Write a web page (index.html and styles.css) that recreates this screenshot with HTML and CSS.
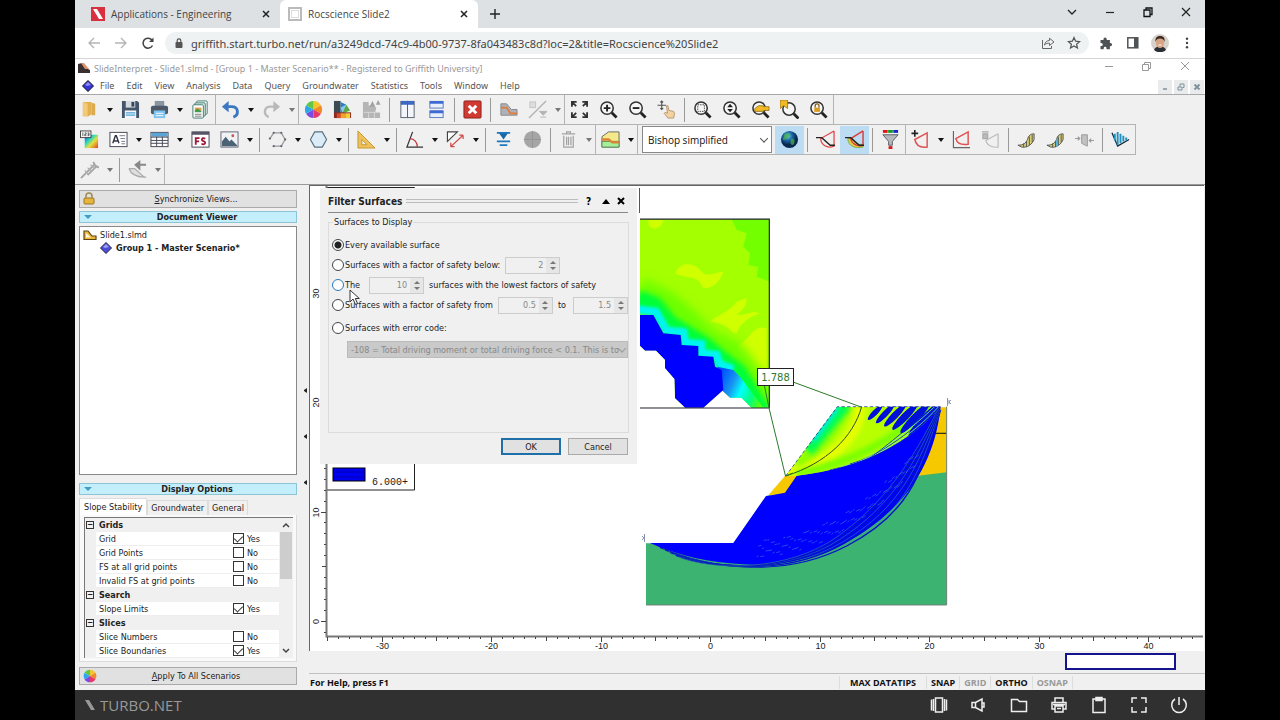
FILE: index.html
```html
<!DOCTYPE html>
<html lang="en">
<head>
    <meta charset="UTF-8">
    <meta name="viewport" content="width=device-width, initial-scale=1.0">
    <title>Rocscience Slide2</title>
    <link rel="stylesheet" href="styles.css">
</head>
<body>
    <div class="screen">
        <div class="tab-strip">
            <div class="tab">
                <svg width="14" height="14" viewBox="0 0 14 14"><rect width="14" height="14" fill="#d9303e"/><path d="M2 2h4l6 10H8z" fill="#fff"/></svg>
                <span class="tab-title">Applications - Engineering</span>
                <button class="tab-close" aria-label="Close tab"><svg width="8" height="8" viewBox="0 0 8 8"><path d="M1 1l6 6M7 1L1 7" stroke="#222" stroke-width="1.5"/></svg></button>
            </div>
            <div class="tab active">
                <svg width="14" height="14" viewBox="0 0 14 14"><rect x="1" y="1" width="12" height="12" fill="#fff" stroke="#bbb" stroke-width="2"/><rect x="3.500" y="3.500" width="7" height="7" fill="none" stroke="#ddd"/></svg>
                <span class="tab-title">Rocscience Slide2</span>
                <button class="tab-close" aria-label="Close tab"><svg width="8" height="8" viewBox="0 0 8 8"><path d="M1 1l6 6M7 1L1 7" stroke="#222" stroke-width="1.5"/></svg></button>
            </div>
            <button class="new-tab" aria-label="New tab"><svg width="12" height="12" viewBox="0 0 12 12"><path d="M6 1v10M1 6h10" stroke="#222" stroke-width="1.400"/></svg></button>
            <div class="window-buttons">
                <button aria-label="Search tabs"><svg width="12" height="12" viewBox="0 0 12 12"><path d="M2 4l4 4 4-4" fill="none" stroke="#222" stroke-width="1.300"/></svg></button>
                <button aria-label="Minimize"><svg width="12" height="12" viewBox="0 0 12 12"><path d="M2 6.500h8" stroke="#222" stroke-width="1.200"/></svg></button>
                <button aria-label="Restore"><svg width="12" height="12" viewBox="0 0 12 12"><path d="M2 4h6v6.500H2zM4 4V2h6v6.500H8" fill="none" stroke="#111" stroke-width="1.300"/></svg></button>
                <button aria-label="Close"><svg width="12" height="12" viewBox="0 0 12 12"><path d="M2 2l8 8M10 2l-8 8" stroke="#222" stroke-width="1.200"/></svg></button>
            </div>
        </div>

        <div class="address-row">
            <button class="nav-btn" aria-label="Back"><svg width="14" height="14" viewBox="0 0 14 14"><path d="M13 7H2M7 2L2 7l5 5" fill="none" stroke="#b4b4b4" stroke-width="1.300"/></svg></button>
            <button class="nav-btn" aria-label="Forward"><svg width="14" height="14" viewBox="0 0 14 14"><path d="M1 7h11M7 2l5 5-5 5" fill="none" stroke="#b4b4b4" stroke-width="1.300"/></svg></button>
            <button class="nav-btn" aria-label="Reload"><svg width="14" height="14" viewBox="0 0 14 14"><path d="M11.500 9.500a5 5 0 1 1 .3-4" fill="none" stroke="#444" stroke-width="1.500"/><path d="M12.500 1.500v4.500H8z" fill="#444"/></svg></button>
            <div class="url-box">
                <svg width="8" height="10" viewBox="0 0 8 10"><rect x=".5" y="4" width="7" height="6" rx="1" fill="#555"/><path d="M2.200 4V2.600a1.800 1.800 0 0 1 3.600 0V4" fill="none" stroke="#555" stroke-width="1.200"/></svg>
                <input class="url" type="text" aria-label="Address" value="griffith.start.turbo.net/run/a3249dcd-74c9-4b00-9737-8fa043483c8d?loc=2&amp;title=Rocscience%20Slide2">
                <button aria-label="Share"><svg width="14" height="14" viewBox="0 0 14 14"><path d="M1.500 4v8.500h9V10" fill="none" stroke="#666"/><path d="M3.500 9c.5-3 2.500-4.500 5-4.500V2.200L13 6 8.500 9.500V7.200C6.500 7 5 7.500 3.500 9z" fill="none" stroke="#666"/></svg></button>
                <button aria-label="Bookmark"><svg width="14" height="14" viewBox="0 0 14 14"><path d="M7 1.500l1.600 3.700 4 .4-3 2.600.9 3.900L7 10l-3.500 2.100.9-3.900-3-2.600 4-.4z" fill="none" stroke="#555" stroke-width="1.200"/></svg></button>
            </div>
            <button class="ext-btn" aria-label="Extensions"><svg width="14" height="14" viewBox="0 0 14 14"><path d="M1.500 4h3V3a1.600 1.600 0 0 1 3.200 0v1h3.200v3h.6a1.600 1.600 0 0 1 0 3.200h-.6v3H7.500v-1a1.400 1.400 0 0 0-2.800 0v1H1.500V10h.8a1.500 1.500 0 0 0 0-3h-.8z" fill="#505356"/></svg></button>
            <button class="ext-btn" aria-label="Side panel"><svg width="14" height="14" viewBox="0 0 14 14"><rect x="1.800" y="1.800" width="10" height="10" fill="none" stroke="#505356" stroke-width="1.500"/><rect x="8" y="2" width="4" height="10" fill="#505356"/></svg></button>
            <button class="ext-btn" aria-label="Profile"><svg width="18" height="18" viewBox="0 0 18 18"><circle cx="9" cy="9" r="9" fill="#d6d2cb"/><path d="M3 16c1-3 3-3.500 6-3.500s5 .5 6 3.500a9 9 0 0 1-12 0z" fill="#2b2f36"/><ellipse cx="9" cy="8.500" rx="4" ry="5.500" fill="#d9a483"/><path d="M4.500 8c-.6-4 1.500-6 4.500-6s5.300 1.500 4.500 6c-.6-2-1.500-3.500-4.500-3.500S5.200 6 4.500 8z" fill="#3a2a22"/><path d="M7.500 11h3" stroke="#fff"/></svg></button>
            <button class="ext-btn" aria-label="Menu"><svg width="14" height="14" viewBox="0 0 14 14"><g fill="#444"><circle cx="7" cy="2.800" r="1.200"/><circle cx="7" cy="7" r="1.200"/><circle cx="7" cy="11.200" r="1.200"/></g></svg></button>
        </div>

        <div class="app-title">
            <svg width="14" height="12" viewBox="0 0 14 12"><rect width="14" height="12" rx="1" fill="#fff"/><path d="M1 2l4-1 2 4 6 3v3H1z" fill="#3a3030"/><path d="M4 1l3 0 5 6-4 0z" fill="#e0916a"/></svg>
            <span>SlideInterpret - Slide1.slmd - [Group 1 - Master Scenario** - Registered to Griffith University]</span>
            <div class="window-buttons faded">
                <button aria-label="Minimize"><svg width="12" height="12" viewBox="0 0 12 12"><path d="M2 6.500h8" stroke="#999"/></svg></button>
                <button aria-label="Restore"><svg width="12" height="12" viewBox="0 0 12 12"><path d="M1.500 4.500h6v6h-6zM3.500 4V2.500h6v6H8" fill="none" stroke="#999"/></svg></button>
                <button aria-label="Close"><svg width="12" height="12" viewBox="0 0 12 12"><path d="M2 2l8 8M10 2l-8 8" stroke="#999"/></svg></button>
            </div>
        </div>

        <nav class="menu-bar">
            <svg width="12" height="12" viewBox="0 0 12 12"><path d="M6 .5L11.500 6 6 11.500.5 6z" fill="#3535d8" stroke="#111"/><path d="M6 2l3 3-4 1-2-1z" fill="#8d8df5"/></svg>
            <button>File</button><button>Edit</button><button>View</button><button>Analysis</button><button>Data</button><button>Query</button><button>Groundwater</button><button>Statistics</button><button>Tools</button><button>Window</button><button>Help</button>
            <div class="child-buttons">
                <button aria-label="Minimize view"><svg width="8" height="8" viewBox="0 0 8 8"><path d="M2 6h4" stroke="#7d9299" stroke-width="1.500"/></svg></button>
                <button aria-label="Restore view"><svg width="8" height="8" viewBox="0 0 8 8"><path d="M1 4h4v3H1zM3 3.500V1h4v3.500H5.500" fill="none" stroke="#7d9299"/></svg></button>
                <button aria-label="Close view"><svg width="8" height="8" viewBox="0 0 8 8"><path d="M1.500 1.500l5 5M6.500 1.500l-5 5" stroke="#7d9299" stroke-width="1.800"/></svg></button>
            </div>
        </nav>

        <div class="toolbars">
            <div class="toolbar">
                <div class="group">
                    <button class="tool" aria-label="Open"><svg viewBox="0 0 20 20"><path d="M3 2h9v13l-3 2H3z" fill="#e3b04f"/><path d="M3 2l5 2v14l-5-2z" fill="#f3ca77"/><path d="M12 3v13h4V4z" fill="#dcab50"/></svg></button>
                    <button class="drop" aria-label="Open options"></button>
                    <button class="tool" aria-label="Save"><svg viewBox="0 0 20 20"><path d="M1 1h16l2 2v16H1z" fill="#44546a"/><rect x="5" y="1" width="10" height="7" fill="#d5dae0"/><rect x="11" y="2" width="3" height="5" fill="#35455a"/><rect x="4" y="11" width="12" height="8" fill="#f4f8fb"/><path d="M5 13.500h10M5 16h10" stroke="#4ca3d8" stroke-width="1.400"/></svg></button>
                    <button class="tool" aria-label="Print"><svg viewBox="0 0 20 20"><rect x="5" y="1" width="10" height="6" fill="#8b96a3"/><rect x="1" y="6" width="18" height="9" rx="2" fill="#4e5a67"/><rect x="4" y="11" width="12" height="8" fill="#7cc3ef"/><path d="M6 14h8M6 16.500h8" stroke="#fff"/></svg></button>
                    <button class="drop" aria-label="Print options"></button>
                    <button class="tool" aria-label="Copy"><svg viewBox="0 0 20 20"><rect x="6" y="1" width="11" height="14" rx="1" fill="#fff" stroke="#3d7a70"/><rect x="4" y="3" width="11" height="14" rx="1" fill="#dff0e4" stroke="#3d7a70"/><rect x="2" y="5" width="11" height="14" rx="1" fill="#fff" stroke="#3d7a70"/><rect x="4" y="8" width="7" height="4" fill="#e2a146"/><path d="M4 11l3-2 4 3v1H4z" fill="#3e9c52"/><path d="M4 15h7M4 17h7" stroke="#777"/></svg></button>
                </div>
                <div class="group">
                    <button class="tool" aria-label="Undo"><svg viewBox="0 0 20 20"><path d="M5 7h6c8 0 8 9 2 11" fill="none" stroke="#3b78c2" stroke-width="3"/><path d="M8 1v12L1 7z" fill="#3b78c2"/></svg></button>
                    <button class="drop" aria-label="Undo history"></button>
                    <button class="tool" aria-label="Redo"><svg viewBox="0 0 20 20"><path d="M14 7H9c-7 0-8 8-2 11" fill="none" stroke="#b9b9b9" stroke-width="2.500"/><path d="M12 1v12l7-6z" fill="#b9b9b9"/></svg></button>
                    <button class="drop off" aria-label="Redo history"></button>
                </div>
                <div class="group">
                    <button class="tool" aria-label="Contours"><svg viewBox="0 0 20 20"><use href="#wheel"/></svg></button>
                    <button class="tool" aria-label="Color palette"><svg viewBox="0 0 20 20"><path d="M1 1h7v13H1z" fill="#3c4a55"/><path d="M8 2l6 3-6 10z" fill="#2f7fc0"/><path d="M14 5l4 6-10 4z" fill="#58a945"/><path d="M8 8l6-3-4 9z" fill="#8cc8ea"/><rect x="1" y="13" width="18" height="6" fill="#8d2b22"/><rect x="4" y="14" width="4" height="5" fill="#d84a2e"/><rect x="8" y="14" width="5" height="5" fill="#f3a12e"/><rect x="13" y="14" width="5" height="5" fill="#f2d13c"/></svg></button>
                    <button class="tool" aria-label="Water palette"><svg viewBox="0 0 20 20"><path d="M1 2h6v4l3-1 5 3-1 5h5v6H1z" fill="#b5b5b5"/><path d="M11 1l3 6H8zM17 0l2.500 5h-5z" fill="#a2a2a2"/><path d="M7 13v6M13 13v6M2 13h17" stroke="#d8d8d8"/></svg></button>
                    <i class="sep"></i>
                    <button class="tool" aria-label="Tile vertically"><svg viewBox="0 0 20 20"><g fill="#f3f5fa" stroke="#5b6470"><rect x="3" y="1.500" width="7" height="17"/><rect x="10" y="1.500" width="7" height="17"/></g><path d="M3 1h14v4H3z" fill="#3d69c4"/><path d="M10 1v18" stroke="#5b6470"/></svg></button>
                    <button class="tool" aria-label="Tile horizontally"><svg viewBox="0 0 20 20"><g fill="#e8eefb" stroke="#5b79b8"><rect x="3" y="1.500" width="14" height="7"/><rect x="3" y="11.500" width="14" height="7"/></g><path d="M3 1h14v3H3zM3 11h14v3H3z" fill="#3d69d4"/></svg></button>
                    <i class="sep"></i>
                    <button class="tool" aria-label="Close view"><svg viewBox="0 0 20 20"><rect x="1" y="1" width="18" height="18" rx="1" fill="#d03a30" stroke="#8c2018"/><path d="M6 6l8 8M14 6l-8 8" stroke="#fff" stroke-width="3"/></svg></button>
                    <i class="sep"></i>
                    <button class="tool" aria-label="Material"><svg viewBox="0 0 20 20"><path d="M2 4h6l5 6h6v6H2z" fill="#aeb1b8" stroke="#888"/><path d="M2 8h6l4 6h7" fill="none" stroke="#e07b3a" stroke-width="1.800"/></svg></button>
                    <button class="tool" aria-label="Query"><svg viewBox="0 0 20 20"><rect x="2" y="2" width="6" height="6" fill="#ddd" stroke="#c5c5c5"/><path d="M1 19L19 1" stroke="#b3b3b3" stroke-width="1.500"/><path d="M12 12h8l-4 4zM13 18h6" fill="#b3b3b3" stroke="#b3b3b3"/></svg></button>
                    <button class="drop off" aria-label="Query options"></button>
                </div>
                <div class="group">
                    <button class="tool" aria-label="Zoom all"><svg viewBox="0 0 20 20"><path d="M2 7V2h5M2.500 2.500l4 4M13 2h5v5M17.500 2.500l-4 4M2 13v5h5M2.500 17.500l4-4M18 13v5h-5M17.500 17.500l-4-4" fill="none" stroke="#333" stroke-width="1.900"/></svg></button>
                    <button class="tool" aria-label="Zoom in"><svg viewBox="0 0 20 20"><use href="#lens"/><path d="M8.500 5v7M5 8.500h7" stroke="#222" stroke-width="2"/></svg></button>
                    <button class="tool" aria-label="Zoom out"><svg viewBox="0 0 20 20"><use href="#lens"/><path d="M5 8.500h7" stroke="#222" stroke-width="2"/></svg></button>
                    <button class="tool" aria-label="Pan"><svg viewBox="0 0 20 20"><path d="M5 1v9M.500 5.500h9M3.500 2.500L5 1l1.500 1.500M3.500 8.500L5 10l1.500-1.500" fill="none" stroke="#555" stroke-width="1.200"/><path d="M10 6l1.500 0 1 5 5 1 1 2-1 5h-6l-4-5 1-1 2.500 1z" fill="#f3d2a2" stroke="#a8865a" stroke-width=".8"/></svg></button>
                    <i class="sep"></i>
                    <button class="tool" aria-label="Zoom window"><svg viewBox="0 0 20 20"><use href="#lens"/><rect x="5" y="5" width="7" height="7" fill="none" stroke="#444" stroke-dasharray="1.500 1"/></svg></button>
                    <button class="tool" aria-label="Zoom mouse"><svg viewBox="0 0 20 20"><use href="#lens"/><path d="M5.500 7.500h6l-3-3.500zM5.500 9.500h6l-3 3.500z" fill="#222"/></svg></button>
                    <button class="tool" aria-label="Zoom excavation"><svg viewBox="0 0 20 20"><use href="#lens"/><path d="M4 12V9l4-3h5v1h6v4h-6v1z" fill="#f2b926" stroke="#8a6b16" stroke-width=".8"/></svg></button>
                    <button class="tool" aria-label="Zoom bookmark"><svg viewBox="0 0 20 20"><g transform="translate(1 1)"><use href="#lens"/></g><path d="M0 0h8v9L4 6 0 9z" fill="#f2b926" stroke="#8a6b16" stroke-width=".8"/></svg></button>
                    <button class="tool" aria-label="Zoom lock"><svg viewBox="0 0 20 20"><use href="#lens"/><rect x="5.500" y="8" width="6" height="4.500" fill="#d99c1c"/><path d="M6.500 8V6a2 2 0 0 1 4 0v2" fill="none" stroke="#7a5a12" stroke-width="1.300"/></svg></button>
                </div>
            </div>

            <div class="toolbar lined">
                <div class="group">
                    <button class="tool" aria-label="Data tips"><svg viewBox="0 0 20 20"><rect x="5" y="5" width="14" height="14" fill="url(#spectrum)"/><rect x=".5" y="1" width="11" height="7" fill="#fff" stroke="#444"/><path d="M3 2.500v4M5 3h1.500v1.500H5V6h1.700M8 3h1.500v3H8M8 4.500h1.500" fill="none" stroke="#333" stroke-width=".8"/></svg></button>
                    <button class="tool" aria-label="Text"><svg viewBox="0 0 20 20"><rect x="1" y="2.500" width="18" height="15" fill="#fff" stroke="#445"/><path d="M4 14l2.700-8h1L10.500 14M5 11.500h4.500" fill="none" stroke="#334" stroke-width="1.500"/><path d="M11 6h6M12 9h5M13 12h4M13 14.500h4" stroke="#778"/></svg></button>
                    <button class="drop" aria-label="Text options"></button>
                    <button class="tool" aria-label="Table"><svg viewBox="0 0 20 20"><rect x="1" y="2.500" width="18" height="15" fill="#fff" stroke="#445"/><rect x="1.500" y="3" width="17" height="4" fill="#5aa5d6"/><path d="M1 7.500h18M1 11h18M1 14h18M7 7v10M13 7v10" stroke="#445"/></svg></button>
                    <button class="drop" aria-label="Table options"></button>
                    <button class="tool" aria-label="Factor of safety"><svg viewBox="0 0 20 20"><rect x="1" y="2" width="18" height="16" fill="#fff" stroke="#445"/><rect x="1" y="2" width="18" height="3" fill="#556"/><path d="M5 15.500V8.500h4M5 12h3.500M15 9c-4-1.500-4.500 2-2 2.700 3 .8 2.500 4.300-2 3" fill="none" stroke="#a01838" stroke-width="1.900"/></svg></button>
                    <button class="tool" aria-label="Image"><svg viewBox="0 0 20 20"><rect x="1" y="2" width="18" height="16" fill="#eef2f5" stroke="#667"/><path d="M2 12l4-5 4 5 2-2 6 6v1H2z" fill="#4b6174"/><circle cx="13.500" cy="6" r="1.500" fill="#d4504c"/></svg></button>
                    <button class="drop" aria-label="Image options"></button>
                    <i class="sep"></i>
                    <button class="tool" aria-label="Polyline"><svg viewBox="0 0 20 20"><path d="M2 9l4-6h8l4 7-4 7H6" fill="none" stroke="#999" stroke-width="1.300"/><g fill="#667"><circle cx="2" cy="9" r="1.200"/><circle cx="6" cy="3" r="1.200"/><circle cx="14" cy="3" r="1.200"/><circle cx="18" cy="10" r="1.200"/><circle cx="14" cy="17" r="1.200"/><circle cx="6" cy="17" r="1.200"/></g></svg></button>
                    <button class="drop" aria-label="Polyline options"></button>
                    <button class="tool" aria-label="Polygon"><svg viewBox="0 0 20 20"><path d="M1.500 10L6 2h8l4.500 8L14 18H6z" fill="#dcecf6" stroke="#56707f" stroke-width="1.200"/></svg></button>
                    <button class="drop" aria-label="Polygon options"></button>
                    <i class="sep"></i>
                    <button class="tool" aria-label="Dimension"><svg viewBox="0 0 20 20"><path d="M1 1l18 18H1z" fill="#edc258" stroke="#c79630"/><path d="M5 10l5.500 5.500H5z" fill="#efefef" stroke="#c79630"/></svg></button>
                    <button class="drop" aria-label="Dimension options"></button>
                    <i class="sep"></i>
                    <button class="tool" aria-label="Angle"><svg viewBox="0 0 20 20"><path d="M8 2L2 18h17" fill="none" stroke="#333" stroke-width="1.300"/><path d="M5 9c5 0 8 4 8 9" fill="none" stroke="#c03030" stroke-width="1.300"/></svg></button>
                    <button class="drop" aria-label="Angle options"></button>
                    <button class="tool" aria-label="Measure"><svg viewBox="0 0 20 20"><path d="M1.500 2v10L12 2z" fill="#fff" stroke="#444" stroke-width="1.200"/><path d="M5 17.500L18 5.500M5 17.500v-4M5 17.500h4M18 5.500v4M18 5.500h-4" fill="none" stroke="#d04848" stroke-width="1.300"/></svg></button>
                    <button class="drop" aria-label="Measure options"></button>
                    <i class="sep"></i>
                    <button class="tool" aria-label="Water level"><svg viewBox="0 0 20 20"><path d="M5 3h10l-5 7z" fill="#1767a8"/><path d="M3 3h14M3 12h14M6 16h8" stroke="#1f78bd" stroke-width="1.800"/></svg></button>
                    <button class="tool" aria-label="Stereonet"><svg viewBox="0 0 20 20"><circle cx="10" cy="10" r="9" fill="#a5a5a5"/><path d="M10 1v18M1 10h18" stroke="#959595"/></svg></button>
                    <i class="sep"></i>
                    <button class="tool" aria-label="Delete"><svg viewBox="0 0 20 20"><path d="M3 4h14M8 4V2h4v2M5 6v12h10V6M8 7v9M10 7v9M12.500 7v9" fill="none" stroke="#a3a3a3" stroke-width="1.300"/></svg></button>
                    <button class="drop off" aria-label="Delete options"></button>
                </div>
                <div class="group">
                    <button class="tool" aria-label="Layers"><svg viewBox="0 0 20 20"><path d="M1 7l7-5h11v16H1z" fill="#f5e98c" stroke="#666"/><path d="M1 12h18v6H1z" fill="#a5ef9a" stroke="#5d8a55"/><path d="M1 10h7l4 3h7" fill="none" stroke="#d98436" stroke-width="2.500"/></svg></button>
                    <button class="drop" aria-label="Layer options"></button>
                </div>
                <div class="group">
                    <span class="combo method"><select aria-label="Analysis method"><option>Bishop simplified</option></select></span>
                    <button class="tool pressed" aria-label="Global minimum"><svg viewBox="0 0 20 20"><circle cx="10" cy="10" r="9" fill="url(#globe)"/><path d="M5 4c5-2 6 1 4 3s-3 4-6 3zM12 9c3 0 4 2 3 5s-4 2-4-1z" fill="#48b04a" opacity=".75"/></svg></button>
                    <i class="sep"></i>
                    <button class="tool" aria-label="Minimum surfaces"><svg viewBox="0 0 20 20"><path d="M19 1v16c-8 3-14-2-14-8L19 1" fill="none" stroke="#e04545" stroke-width="1.300"/><path d="M0 8h6l9 8h5" fill="none" stroke="#222" stroke-width="1.500"/></svg></button>
                    <button class="tool pressed" aria-label="All surfaces"><svg viewBox="0 0 20 20"><path d="M3 9c0 8 8 11 16 9v-3c-7 1-10-2-11-6z" fill="#e9c94a" stroke="#78b04a"/><path d="M19 1v15c-7 2-12-2-13-7L19 1" fill="none" stroke="#d93b3b" stroke-width="1.500"/><path d="M0 8h6l9 8h5" fill="none" stroke="#222" stroke-width="1.500"/></svg></button>
                    <i class="sep"></i>
                    <button class="tool" aria-label="Filter surfaces"><svg viewBox="0 0 20 20"><rect x="2" y="0" width="5" height="3" fill="#e01818"/><rect x="7.500" y="0" width="5" height="3" fill="#159a2c"/><rect x="13" y="0" width="5" height="3" fill="#1c22d8"/><path d="M2 5h16l-6 7v4H8v-4z" fill="#b5b9bd" stroke="#5c6064"/><rect x="8" y="17" width="4" height="3" fill="#d81818"/></svg></button>
                </div>
                <div class="group">
                    <button class="tool" aria-label="Add query"><svg viewBox="0 0 20 20"><path d="M4 0v7M.500 3.500h7" stroke="#222" stroke-width="1.700"/><path d="M17 3v15c-8 1-12-3-13-8z" fill="none" stroke="#e05050" stroke-width="1.500"/></svg></button>
                    <button class="drop" aria-label="Query options"></button>
                    <button class="tool" aria-label="Graph query"><svg viewBox="0 0 20 20"><path d="M1.500 1v17.500H19" fill="none" stroke="#666" stroke-width="1.200"/><path d="M17 2v13c-8 1-12-2-13-6z" fill="none" stroke="#e05050" stroke-width="1.500"/></svg></button>
                    <button class="tool" aria-label="Delete query"><svg viewBox="0 0 20 20"><path d="M1 2h7M2 4h5v5H2z" fill="#bbb" stroke="#aaa" stroke-width="1.300"/><path d="M18 4v14c-8 1-12-3-13-7l13-7" fill="none" stroke="#bcbcbc" stroke-width="1.300"/></svg></button>
                    <i class="sep"></i>
                    <button class="tool" aria-label="Show slices"><svg viewBox="0 0 20 20"><path d="M1 16c6 0 8-2 10-6 1-4 3-6 7-6v6c-2 5-7 9-13 8z" fill="#d9cf74" stroke="#555"/><path d="M7 14v4M10 12v6M13 7v9M16 5v8" stroke="#555"/></svg></button>
                    <button class="tool" aria-label="Query slices"><svg viewBox="0 0 20 20"><path d="M1 16c6 0 8-2 10-6 1-4 3-6 7-6v6c-2 5-7 9-13 8z" fill="#d9cf74" stroke="#555"/><path d="M10 12l3-5v9l-3 2z" fill="#59b7dc"/><path d="M7 14v4M10 12v6M13 7v9M16 5v8" stroke="#555"/></svg></button>
                    <button class="tool" aria-label="Slice data"><svg viewBox="0 0 20 20"><path d="M7 5h6v12l-6-3z" fill="#c2c2c2" stroke="#999"/><path d="M0 9h5M3 7l2 2-2 2M20 11h-5M17 9l-2 2 2 2" fill="none" stroke="#999" stroke-width="1.200"/></svg></button>
                    <i class="sep"></i>
                    <button class="tool" aria-label="Plot along surface"><svg viewBox="0 0 20 20"><path d="M1 3l6 14 12-7" fill="none" stroke="#123" stroke-width="1.300"/><path d="M4 4v7M7 2v14M10 4v10M13 6v6M16 8v3" stroke="#2090c0" stroke-width="2"/></svg></button>
                </div>
            </div>

            <div class="toolbar">
                <div class="group">
                    <button class="tool" aria-label="Support forces"><svg viewBox="0 0 20 20"><path d="M1 19L6 14M6 14l9-9M8 16L17 7M14 2l2 4 4 2" fill="none" stroke="#a5a5a5" stroke-width="2"/><path d="M5 11l4 4M8 8l4 4M11 5l4 4" fill="none" stroke="#b0b0b0" stroke-width="1.200"/></svg></button>
                    <button class="drop off" aria-label="Support options"></button>
                    <i class="sep"></i>
                    <button class="tool" aria-label="Loads"><svg viewBox="0 0 20 20"><path d="M1 9h6l10 9h2M1 9c2 6 8 9 16 9" fill="#ddd" stroke="#ababab" stroke-width="1.300"/><path d="M19 5h-8M12 2L8 5l4 4z" fill="#888" stroke="#888" stroke-width="2"/></svg></button>
                    <button class="drop off" aria-label="Load options"></button>
                </div>
            </div>
        </div>

        <div class="workspace">
            <aside class="side">
                <button class="wide-btn">
                    <svg width="12" height="14" viewBox="0 0 12 14"><rect x="1" y="6" width="10" height="6" rx="1" fill="#e5b53c" stroke="#9c7420"/><path d="M3 6V4a3 3 0 0 1 6 0v2" fill="none" stroke="#9c8a55" stroke-width="1.500"/></svg>
                    <span><u>S</u>ynchronize Views...</span>
                </button>
                <h2 class="pane-title"><svg width="8" height="5" viewBox="0 0 8 5"><path d="M0 0h8L4 4z" fill="#3f9fc0"/></svg><span>Document Viewer</span></h2>
                <div class="tree">
                    <div class="tree-row"><svg width="14" height="10" viewBox="0 0 14 10"><path d="M1 1h4l4 5h4v3.500H1z" fill="#efb83a" stroke="#5b4312" stroke-width="1.200"/><path d="M3 3l5 4.500H3z" fill="#fff6d8"/></svg>Slide1.slmd</div>
                    <div class="tree-row child"><svg width="12" height="12" viewBox="0 0 12 12"><path d="M6 .5L11.500 6 6 11.500.5 6z" fill="#4b4bdc" stroke="#223"/><path d="M6 2l3 3-4 1-2-1z" fill="#9d9df5"/></svg><b>Group 1 - Master Scenario*</b></div>
                </div>
                <h2 class="pane-title"><svg width="8" height="5" viewBox="0 0 8 5"><path d="M0 0h8L4 4z" fill="#3f9fc0"/></svg><span>Display Options</span></h2>
                <div class="tabs">
                    <button class="active">Slope Stability</button><button>Groundwater</button><button>General</button>
                </div>
                <div class="tab-page">
                    <div class="props">
                        <div class="prop-list">
                            <div class="prop-head"><i>−</i>Grids</div>
                            <div class="prop"><span>Grid</span><label><input type="checkbox" checked>Yes</label></div>
                            <div class="prop"><span>Grid Points</span><label><input type="checkbox">No</label></div>
                            <div class="prop"><span>FS at all grid points</span><label><input type="checkbox">No</label></div>
                            <div class="prop"><span>Invalid FS at grid points</span><label><input type="checkbox">No</label></div>
                            <div class="prop-head"><i>−</i>Search</div>
                            <div class="prop"><span>Slope Limits</span><label><input type="checkbox" checked>Yes</label></div>
                            <div class="prop-head"><i>−</i>Slices</div>
                            <div class="prop"><span>Slice Numbers</span><label><input type="checkbox">No</label></div>
                            <div class="prop"><span>Slice Boundaries</span><label><input type="checkbox" checked>Yes</label></div>
                        </div>
                        <div class="scroll">
                            <svg width="8" height="6" viewBox="0 0 8 6"><path d="M1 5l3-3 3 3" fill="none" stroke="#444" stroke-width="1.500"/></svg>
                            <div class="thumb"></div>
                            <svg width="8" height="6" viewBox="0 0 8 6"><path d="M1 1l3 3 3-3" fill="none" stroke="#444" stroke-width="1.500"/></svg>
                        </div>
                    </div>
                </div>
                <button class="wide-btn">
                    <svg width="14" height="14" viewBox="0 0 20 20"><use href="#wheel"/></svg>
                    <span><u>A</u>pply To All Scenarios</span>
                </button>
            </aside>
            <div class="splitter"><i></i><i></i><i></i></div>

            <main class="view">
                <div class="canvas">
                    <svg class="plot" id="plot" role="img" aria-label="Slope stability model">
                        <defs>
                            <g id="wheel"><path d="M10 10V1a9 9 0 0 1 7.800 4.500z" fill="#f3c62e"/><path d="M10 10l7.800-4.500a9 9 0 0 1 0 9z" fill="#f08a24"/><path d="M10 10l7.800 4.500A9 9 0 0 1 10 19z" fill="#e8386a"/><path d="M10 10v9a9 9 0 0 1-7.800-4.500z" fill="#7c4be0"/><path d="M10 10l-7.800 4.500a9 9 0 0 1 0-9z" fill="#2ea6ea"/><path d="M10 10L2.200 5.500A9 9 0 0 1 10 1z" fill="#62c844"/></g>
                            <g id="lens"><circle cx="8.500" cy="8.500" r="6.500" fill="#f6f6f6" stroke="#333" stroke-width="1.600"/><path d="M13.500 13.500l5 5" stroke="#222" stroke-width="3"/></g>
                            <linearGradient id="spectrum" x2="1" y2="1"><stop offset=".1" stop-color="#2060e0"/><stop offset=".35" stop-color="#20d8c0"/><stop offset=".6" stop-color="#e8e040"/><stop offset="1" stop-color="#e04020"/></linearGradient>
                            <radialGradient id="globe" cx=".4" cy=".3"><stop offset="0" stop-color="#7ad0e8"/><stop offset=".5" stop-color="#1c6aa8"/><stop offset="1" stop-color="#0a2850"/></radialGradient>
                            <linearGradient id="toe" gradientUnits="userSpaceOnUse" x1="270" y1="500" x2="405" y2="560">
                                <stop offset="0" stop-color="#0050ff"/><stop offset=".3" stop-color="#1898f0"/><stop offset=".5" stop-color="#00ffff"/><stop offset=".75" stop-color="#00ff80"/><stop offset="1" stop-color="#60ff00"/>
                            </linearGradient>
                            <filter id="fine" x="-20%" y="-20%" width="140%" height="140%"><feGaussianBlur stdDeviation="4"/></filter>
                            <filter id="soft" x="-20%" y="-20%" width="140%" height="140%"><feGaussianBlur stdDeviation="8"/></filter>
                            <filter id="wide" x="-20%" y="-20%" width="140%" height="140%"><feGaussianBlur stdDeviation="14"/></filter>
                            <clipPath id="gridClip"><path d="M30 27H418V593H365L335 563H300L275 540 220 593H30z"/></clipPath>
                            <clipPath id="massClip"><path d="M467 258L622 50H932C850 150 700 235 500 257z"/></clipPath>
                        </defs>
                        <g transform="translate(-309 -185)">
                            <!-- legend -->
                            <path d="M326 187.500H414.500V490H326" fill="none" stroke="#222"/>
                            <rect x="333" y="468" width="32" height="13" fill="#0000f0" stroke="#000"/>
                            <path d="M334 472h30M334 477h30" stroke="#0000b0"/>
                            <text class="legend" x="372" y="485">6.000+</text>

                            <!-- search grid contours -->
                            <g transform="translate(630 210) scale(.3333)">
                                <g clip-path="url(#gridClip)">
                                    <rect x="30" y="27" width="388" height="566" fill="#a4ff00"/>
                                    <path d="M305 27L320 60 350 70 340 110 360 130 355 165 385 170 380 200 418 215V27z" fill="#74ff00"/>
                                    <path d="M135 190c20-40 60-30 80-5 20 20 40 0 65 0-10 30-30 50-60 50-20-45-50-25-85-45zM240 335c20-20 60-30 80-60l30-10c0 30-20 40-30 50 30 0 50-15 70-5-30 10-60 30-70 60-20 0-20-30-80-35zM330 400c30-10 40-60 80-45v130l-30 30c-30-20-60-30-80-60zM55 30h45c-5 25-30 35-45 15z" fill="#d0ff00"/>
                                    <path d="M20 250L100 290 160 340 220 400 300 440 360 520 430 590" fill="none" stroke="#6cff00" stroke-width="100" filter="url(#wide)"/>
                                    <path d="M20 270L70 290 115 345 165 375 220 410 262 445 320 490 400 620" fill="none" stroke="#00ff38" stroke-width="62" filter="url(#soft)"/>
                                    <path d="M20 298L78 305 110 362 160 366 166 398 214 402 216 430 260 434 268 462 310 478" fill="none" stroke="#00f4f4" stroke-width="24" filter="url(#fine)"/>
                                    <path d="M262 470L310 480 330 500 400 593H220L275 540z" fill="url(#toe)"/>
                                </g>
                                <path d="M30 315H70L100 370 152 375 155 405 205 408V437L250 440 255 470 275 480 280 540 220 593H165L135 565 133 507 105 475V450L78 422H45L30 408z" fill="#00f"/>
                                <path d="M30 408L45 422H78L105 450V475L133 507 135 565 165 593H30z" fill="#fff"/>
                                <path d="M30 27.500H418V594H30" fill="none" stroke="#223" stroke-width="3.500"/>
                            </g>

                            <!-- slope section -->
                            <g transform="translate(630 390) scale(.3333)">
                                <path d="M48 460H310L410 318 800 240 950 240V645H48z" fill="#3cb371"/>
                                <path d="M415 316L465 258 620 200 900 52H950V247L780 268 600 300z" fill="#f5c800"/>
                                <path d="M913 130H950" stroke="#222" stroke-width="3.500"/>
                                <path d="M950 50V645H48" fill="none" stroke="#708078" stroke-width="3"/>
                                <path d="M60 459H310L408 318 425 316 465 308 500 257 700 150 780 50H932C915 210 840 330 710 420 580 510 440 535 300 520 200 510 130 490 60 459z" fill="#00f"/>
                                <g id="rim"></g>
                                <g clip-path="url(#massClip)">
                                    <rect x="460" y="45" width="480" height="220" fill="#b8ff00"/>
                                    <path d="M690 45C690 140 600 220 470 250" fill="none" stroke="#e6ff00" stroke-width="34" filter="url(#soft)"/>
                                    <path d="M900 40C800 150 660 220 500 252" fill="none" stroke="#74ff00" stroke-width="22" filter="url(#soft)"/>
                                    <path d="M650 40C640 100 570 180 500 220" fill="none" stroke="#8cff00" stroke-width="26" filter="url(#soft)"/>
                                    <path d="M645 40L530 180" fill="none" stroke="#00ff50" stroke-width="44" filter="url(#soft)"/>
                                    <path d="M618 50L545 150" fill="none" stroke="#00e8f0" stroke-width="22" filter="url(#soft)"/>
                                    <g id="fingers"></g>
                                </g>
                                <path d="M467 258L622 50H932" fill="none" stroke="#00208a" stroke-width="2" stroke-dasharray="10 7"/>
                                <path d="M695 50C670 140 590 220 467 258" fill="none" stroke="#252" stroke-width="3"/>
                                <g id="specks"></g>
                            </g>

                            <!-- critical surface callout -->
                            <path d="M764.500 386L769 408 785.500 476 793 473M793 382L861 407" fill="none" stroke="#2c7a2c"/>
                            <rect x="757.500" y="368.500" width="36" height="17" fill="#fff" stroke="#222"/>
                            <text class="callout" x="775.500" y="381">1.788</text>
                            <path d="M947.500 398v8M949 400v4M951 400l-2 2 2 2M644.500 534v8M642 536l2 2-2 2" fill="none" stroke="#8794b0"/>
                            <path d="M639.500 188v25" stroke="#555"/>

                            <g id="rulers"><path d="M326.500 186V636.500H1203" fill="none" stroke="#777" stroke-width="2"/></g>
                        </g>
                    </svg>

                    <form class="dialog" onsubmit="return false">
                        <div class="dialog-title">
                            <b>Filter Surfaces</b><i></i>
                            <button type="button" aria-label="Help">?</button>
                            <button type="button" aria-label="Roll up"><svg width="10" height="6" viewBox="0 0 10 6"><path d="M5 1l4 5H1z"/></svg></button>
                            <button type="button" aria-label="Close"><svg width="8" height="8" viewBox="0 0 8 8"><path d="M1 1l6 6M7 1L1 7" stroke="#000" stroke-width="2"/></svg></button>
                        </div>
                        <fieldset>
                            <legend>Surfaces to Display</legend>
                            <div class="opt"><label><input type="radio" name="mode" checked>Every available surface</label></div>
                            <div class="opt"><label for="below"><input type="radio" name="mode" id="below">Surfaces with a factor of safety below:</label><span class="spin"><input type="text" value="2" disabled aria-label="Safety below"><i></i></span></div>
                            <div class="opt"><label><input class="hover" type="radio" name="mode">The</label><span class="spin after-the"><input type="text" value="10" disabled aria-label="Surface count"><i></i></span><span>surfaces with the lowest factors of safety</span></div>
                            <div class="opt"><label><input type="radio" name="mode">Surfaces with a factor of safety from</label><span class="spin"><input type="text" value="0.5" disabled aria-label="Safety from"><i></i></span><span>to</span><span class="spin last"><input type="text" value="1.5" disabled aria-label="Safety to"><i></i></span></div>
                            <div class="opt error"><label><input type="radio" name="mode">Surfaces with error code:</label></div>
                            <span class="combo error-code"><select disabled aria-label="Error code"><option>-108 = Total driving moment or total driving force &lt; 0.1. This is to</option></select></span>
                        </fieldset>
                        <div class="dialog-buttons"><button class="ok">OK</button><button type="button">Cancel</button></div>
                        <svg class="pointer" width="11" height="17" viewBox="0 0 11 17"><path d="M1 1v12l3-3 2.500 5.500 2-1L6.300 9.500h4z" fill="#fff" stroke="#333"/></svg>
                    </form>
                </div>
                <div class="lower"><div class="minimap"></div></div>
                <div class="status">
                    <b>For Help, press F1</b>
                    <div class="modes"><b class="tips">MAX DATATIPS</b><b>SNAP</b><b class="off">GRID</b><b>ORTHO</b><b class="off">OSNAP</b></div>
                </div>
            </main>
        </div>

        <footer class="turbo">
            <svg width="10" height="10" viewBox="0 0 10 10"><path d="M0 0h4l6 10H6z" fill="#999"/></svg>
            <span>TURBO.NET</span>
            <div class="turbo-tools">
                <button aria-label="Windows"><svg viewBox="0 0 18 18"><rect x="5.500" y="2" width="7" height="14"/><path d="M3.500 3v12M1.500 3.500v11M14.500 3v12M16.500 3.500v11"/></svg></button>
                <button aria-label="Sound"><svg viewBox="0 0 18 18"><path d="M12 3v12L5.500 11.500H2v-5h3.500z"/><path d="M5.500 6.500v5M12 7h2v4h-2"/></svg></button>
                <button aria-label="Files"><svg viewBox="0 0 18 18"><path d="M1.500 15.500v-12h6l2 2h7v10z"/></svg></button>
                <button aria-label="Print"><svg viewBox="0 0 18 18"><path d="M5 6V2h8v4M5 13H2V6.500h14V13h-3M5 10h8v6H5zM7 12.500h4M3 8.500h12"/></svg></button>
                <button aria-label="Clipboard"><svg viewBox="0 0 18 18"><path d="M3 3h12v13.500H3z"/><path d="M6 1.500h6v3H6z" fill="#eee"/></svg></button>
                <button aria-label="Full screen"><svg viewBox="0 0 18 18"><path d="M2 7V2h5M11 2h5v5M16 11v5h-5M7 16H2v-5"/></svg></button>
                <button aria-label="Power"><svg viewBox="0 0 18 18"><path d="M5 3a7.300 7.300 0 1 0 8 0M9 1v8"/></svg></button>
            </div>
        </footer>
    </div>
    <script src="script.js"></script>
</body>
</html>
```
FILE: styles.css
```css
* {
    box-sizing: border-box;
}

body {
    margin: 0;
    background-color: #000;
    font-family: "DejaVu Sans Condensed", "DejaVu Sans", sans-serif;
    font-size: 9px;
    color: #222;
}

button {
    font: inherit;
    color: inherit;
    background: none;
    border: 0;
    padding: 0;
    display: flex;
    align-items: center;
    justify-content: center;
}

svg {
    display: block;
    flex: none;
}

.screen {
    display: flex;
    flex-direction: column;
    height: 100vh;
    margin: 0 75px;
    background-color: #f0f0f0;
}

/* browser */
.tab-strip {
    display: flex;
    height: 28px;
    background-color: #dde1e4;
    font-family: "Open Sans", "Noto Sans", sans-serif;
    font-size: 10px;
    color: #444;
}

.tab {
    display: flex;
    align-items: center;
    gap: 6px;
    width: 205px;
    padding: 0 8px 0 16px;
}

.tab.active {
    width: 198px;
    padding-left: 8px;
    background-color: #fff;
    border-radius: 6px 6px 0 0;
}

.tab-title {
    flex: 1;
    white-space: nowrap;
}

.tab-close {
    width: 12px;
    height: 12px;
}

.new-tab {
    width: 34px;
}

.window-buttons {
    display: flex;
    margin-left: auto;
}

.window-buttons button {
    width: 38px;
    padding-bottom: 4px;
}

.window-buttons.faded {
    margin-right: 1px;
}

.address-row {
    display: flex;
    align-items: center;
    height: 31px;
    padding: 0 5px;
    background-color: #fff;
    border-bottom: 1px solid #d4d4d4;
}

.nav-btn,
.ext-btn {
    width: 27px;
    height: 24px;
}

.url-box {
    display: flex;
    align-items: center;
    flex: 1;
    height: 22px;
    margin: 0 3px 0 4px;
    padding: 0 2px 0 10px;
    border-radius: 11px;
    background-color: #eff2f2;
}

.url {
    flex: 1;
    margin-left: 8px;
    padding: 0;
    border: 0;
    outline: 0;
    background: none;
    font-family: "Noto Sans", "Open Sans", sans-serif;
    font-size: 11px;
    color: #444;
}

.url-box button {
    width: 26px;
}

/* application frame */
.app-title,
.menu-bar {
    display: flex;
    align-items: center;
    background-color: #fff;
    font-family: "Noto Sans", "Open Sans", sans-serif;
    font-size: 9px;
}

.app-title {
    height: 18px;
    padding-left: 2px;
    gap: 3px;
    color: #999;
}

.menu-bar {
    height: 18px;
    padding-left: 7px;
    border-bottom: 1px solid #a8a8a8;
    color: #555;
}

.menu-bar > button {
    padding: 0 6px;
}

.child-buttons {
    display: flex;
    align-self: flex-end;
    gap: 2px;
    margin-left: auto;
    padding-right: 1px;
}

.child-buttons button {
    width: 14px;
    height: 14px;
    background-color: #e9ebec;
}

.toolbars {
    display: flex;
    flex-direction: column;
    align-items: flex-start;
}

.toolbar {
    display: flex;
    height: 29px;
}

.toolbar.lined {
    height: 31px;
    border: solid #b4b4b4;
    border-width: 1px 0;
}

.group {
    display: flex;
    align-items: center;
    border-right: 1px solid #b4b4b4;
}

.tool {
    width: 29px;
    height: 28px;
}

.tool svg {
    width: 19px;
    height: 19px;
}

.tool.pressed {
    background-color: #bcdcf4;
}

.drop {
    width: 12px;
    height: 28px;
}

.drop::after {
    content: "";
    border: 3px solid transparent;
    border-top: 4px solid #111;
    border-bottom: 0;
}

.drop.off::after {
    border-top-color: #777;
}

.sep {
    width: 1px;
    height: 24px;
    margin: 0 3px;
    background-color: #999;
}

.combo {
    display: flex;
    position: relative;
}

.combo::after {
    content: "";
    position: absolute;
    right: 5px;
    top: 50%;
    width: 5px;
    height: 5px;
    border: solid #555;
    border-width: 0 1px 1px 0;
    transform: translateY(-75%) rotate(45deg);
}

.combo select {
    appearance: none;
    flex: 1;
    min-width: 0;
    padding: 0 14px 0 5px;
    border: 1px solid #888;
    border-radius: 0;
    background-color: #fff;
    font: inherit;
    color: #111;
}

.method {
    width: 130px;
    height: 27px;
    margin: 0 3px 0 4px;
    font-family: "Open Sans", "Noto Sans", sans-serif;
    font-size: 10px;
}

/* side panel */
.workspace {
    display: flex;
    flex: 1;
    min-height: 0;
    border-top: 1px solid #999;
}

.side {
    display: flex;
    flex-direction: column;
    width: 224px;
    padding: 5px 2px 5px 4px;
}

.wide-btn {
    position: relative;
    height: 18px;
    padding-left: 16px;
    border: 1px solid #aaa;
    background-color: #e1e1e1;
}

.wide-btn svg {
    position: absolute;
    left: 3px;
}

.pane-title {
    display: flex;
    align-items: center;
    height: 12px;
    margin: 3px 0;
    border: 1px solid #8fc3d6;
    background-color: #c3effd;
    padding-left: 4px;
    font-size: 9px;
    line-height: 10px;
}

.pane-title span {
    flex: 1;
    padding-left: 6px;
    text-align: center;
}

.tree {
    flex: 1;
    margin-bottom: 5px;
    padding: 1px 3px;
    border: 1px solid #888;
    background-color: #fff;
}

.tree-row {
    display: flex;
    align-items: center;
    gap: 3px;
    height: 13px;
}

.tree-row.child {
    padding-left: 17px;
    gap: 4px;
}

.tabs {
    display: flex;
    align-items: flex-end;
    height: 17px;
}

.tabs button {
    height: 15px;
    padding: 0 3px;
    border: 1px solid #dcdcdc;
    border-bottom: 0;
}

.tabs .active {
    height: 17px;
    padding: 0 4px;
    background-color: #fff;
}

.tab-page {
    padding: 2px 3px 3px 4px;
    margin-bottom: 5px;
    border: 1px solid #dcdcdc;
    border-top: 0;
    background-color: #f9f9f9;
}

.props {
    display: flex;
    height: 141px;
    border: solid #777;
    border-width: 1px 0 0 1px;
    overflow: hidden;
}

.prop-list {
    flex: 1;
    background-color: #f0f0f0;
}

.prop-head {
    display: flex;
    align-items: center;
    height: 14px;
    gap: 5px;
    padding-left: 1px;
    font-weight: bold;
}

.prop-head i {
    width: 8px;
    height: 8px;
    border: 1px solid #333;
    font-style: normal;
    font-size: 8px;
    line-height: 6px;
    text-align: center;
}

.prop {
    display: flex;
    align-items: center;
    height: 14px;
    margin-left: 11px;
    padding-left: 3px;
    border-bottom: 1px solid #eee;
    background-color: #fff;
}

.prop span {
    width: 134px;
}

.prop label {
    display: flex;
    align-items: center;
    gap: 3px;
}

input[type="checkbox"] {
    appearance: none;
    width: 11px;
    height: 11px;
    margin: 0;
    border: 1px solid #333;
    background-color: #fff;
}

input[type="checkbox"]:checked::after {
    content: "";
    display: block;
    width: 4px;
    height: 7px;
    margin: 0 auto;
    border: solid #333;
    border-width: 0 1px 1px 0;
    transform: rotate(45deg);
}

.scroll {
    display: flex;
    flex-direction: column;
    align-items: center;
    width: 14px;
    padding: 4px 0;
    background-color: #f0f0f0;
}

.thumb {
    width: 12px;
    height: 47px;
    margin: 4px 0 auto;
    background-color: #cdcdcd;
}

.splitter {
    display: flex;
    flex-direction: column;
    gap: 41px;
    width: 10px;
    padding: 203px 0 0 5px;
}

.splitter i {
    height: 5px;
    border: 2px solid transparent;
    border-right: 3px solid #222;
    border-left: 0;
    width: 3px;
}

/* model view */
.view {
    display: flex;
    flex: 1;
    flex-direction: column;
    min-width: 0;
}

.canvas {
    position: relative;
    flex: 1;
    background-color: #fff;
    border-right: 1px solid #eee;
    box-shadow: inset 1px 1px #666;
}

.plot {
    width: 100%;
    height: 100%;
}

.plot text {
    font-family: "Liberation Sans", Arial, sans-serif;
    font-size: 9px;
    text-anchor: middle;
    fill: #222;
}

.plot .legend {
    font-family: "Liberation Mono", monospace;
    font-size: 10px;
    text-anchor: start;
}

.plot .callout {
    font-family: "DejaVu Sans", sans-serif;
    font-size: 10px;
    fill: #2c7a2c;
}

.lower {
    display: flex;
    justify-content: flex-end;
    height: 22px;
    padding: 2px 29px 3px;
}

.minimap {
    width: 111px;
    border: 2px solid #14148c;
    background-color: #fff;
}

.status {
    display: flex;
    align-items: center;
    justify-content: space-between;
    height: 17px;
    padding: 0 132px 0 1px;
    border-top: 1px solid #c0c0c0;
    font-family: "Open Sans", "Noto Sans", sans-serif;
    font-size: 9px;
    color: #111;
}

.modes {
    display: flex;
}

.modes b {
    padding: 0 4px;
    border-right: 1px solid #ddd;
}

.modes .tips {
    padding: 0 10px;
    border-left: 1px solid #ddd;
}

.modes .off {
    color: #999;
}

/* filter dialog floats over the model */
.dialog {
    position: absolute;
    left: 11px;
    top: 3px;
    width: 317px;
    padding: 7px 9px 9px 8px;
    background-color: #f0f0f0;
}

.dialog-title {
    display: flex;
    align-items: center;
    height: 18px;
    padding-bottom: 5px;
    border-bottom: 1px solid #888;
    font-size: 10px;
}

.dialog-title i {
    flex: 1;
    height: 4px;
    margin: 0 2px 0 4px;
    border: solid #bbb;
    border-width: 1px 0;
}

.dialog-title button {
    width: 17px;
    font-weight: bold;
    color: #000;
}

.dialog-title button:last-child {
    width: 14px;
}

fieldset {
    height: 216px;
    margin: 4px 0 5px;
    padding: 8px 0 0 3px;
    border: 1px solid #dcdcdc;
}

legend {
    margin-left: 1px;
    padding: 0 1px;
}

.opt {
    display: flex;
    align-items: center;
    height: 20px;
    gap: 5px;
}

.opt.error {
    height: 26px;
}

.opt label {
    display: flex;
    align-items: center;
    gap: 1px;
    white-space: nowrap;
}

.opt > span {
    white-space: nowrap;
}

input[type="radio"] {
    appearance: none;
    width: 12px;
    height: 12px;
    margin: 0;
    border: 1px solid #444;
    border-radius: 50%;
    background-color: #fff;
}

input[type="radio"]:checked {
    background: radial-gradient(#222 0 3px, #fff 4px);
}

input.hover {
    border-color: #2a78b8;
}

.spin {
    display: flex;
    width: 55px;
    height: 17px;
    border: 1px solid #ccc;
}

.spin.after-the {
    margin-left: 4px;
}

.spin.last {
    margin-left: 2px;
}

.spin input {
    width: 40px;
    padding: 0 3px;
    border: 0;
    background: none;
    font: inherit;
    text-align: right;
    color: #888;
}

.spin i {
    display: flex;
    flex: 1;
    flex-direction: column;
    align-items: center;
    justify-content: center;
    gap: 3px;
    background-color: #e6e6e6;
}

.spin i::before,
.spin i::after {
    content: "";
    border: 3px solid transparent;
    border-top: 0;
    border-bottom: 3px solid #777;
}

.spin i::after {
    border-top: 3px solid #777;
    border-bottom: 0;
}

.error-code {
    width: 281px;
    height: 17px;
    margin-left: 15px;
}

.error-code select {
    padding: 0 8px 0 3px;
    border-color: #bbb;
    background-color: #c9c9c9;
    color: #888;
    opacity: 1;
}

.error-code::after {
    right: 3px;
    border-color: #999;
}

.dialog-buttons {
    display: flex;
    justify-content: flex-end;
    gap: 7px;
}

.dialog-buttons button {
    width: 60px;
    height: 17px;
    border: 1px solid #aaa;
    background-color: #e1e1e1;
}

.dialog-buttons .ok {
    border: 2px solid #1f6fa8;
}

.pointer {
    position: absolute;
    left: 29px;
    top: 101px;
}

/* streaming bar */
.turbo {
    display: flex;
    align-items: center;
    height: 30px;
    padding: 0 17px 0 10px;
    gap: 5px;
    background-color: #303030;
    font-family: "Open Sans", "Noto Sans", sans-serif;
    font-size: 15px;
    color: #999;
}

.turbo-tools {
    display: flex;
    gap: 22px;
    margin-left: auto;
}

.turbo-tools svg {
    width: 18px;
    height: 18px;
    fill: none;
    stroke: #eee;
    stroke-width: 1.500;
}
```
FILE: script.js
```js
const NS = 'http://www.w3.org/2000/svg';

function add(parent, name, attrs, text) {
    const node = document.createElementNS(NS, name);
    for (const key in attrs) node.setAttribute(key, attrs[key]);
    if (text !== undefined) node.textContent = text;
    parent.appendChild(node);
}

// rulers: one tick per metre, longer at 5 and 10
const rulers = document.getElementById('rulers');
const scale = 10.95;
let ticks = '';
for (let m = -35; m <= 44; m++) {
    const x = Math.round(710 + m * scale) + 0.5;
    const len = m % 10 === 0 ? 5 : m % 5 === 0 ? 4 : 2;
    ticks += `M${x} 637v${len}`;
    if (m % 10 === 0) add(rulers, 'text', { x: x, y: 649 }, m);
}
for (let m = -1; m <= 39; m++) {
    const y = Math.round(621 - m * scale) + 0.5;
    const len = m % 10 === 0 ? 5 : m % 5 === 0 ? 4 : 2;
    ticks += `M326 ${y}h-${len}`;
    if (m % 10 === 0) add(rulers, 'text', { transform: `translate(319 ${y}) rotate(-90)` }, m);
}
add(rulers, 'path', { d: ticks, stroke: '#444', fill: 'none' });

// deep surfaces that run past the blue mass
const rim = document.getElementById('rim');
for (let i = 0; i < 8; i++) {
    const d = i * 4;
    add(rim, 'path', {
        d: `M${90 + d * 2} ${472 + d}C${220 + d} ${530 + d / 2} ${450 + d} ${572 - d} ${650 - d} ${468 - d}S${875 - d} ${240 - d} ${932 - d / 3} 60`,
        fill: 'none', stroke: i % 2 ? '#3c9c90' : '#0010c8', 'stroke-width': i % 2 ? 1.5 : 4
    });
}

// blue lobes near the crest
const fingers = document.getElementById('fingers');
for (let i = 0; i < 7; i++) {
    const x = 735 + i * 30;
    add(fingers, 'ellipse', { cx: x, cy: 68 + i * 4, rx: 30 + i * 8, ry: 8 + i, transform: `rotate(-46 ${x} ${68 + i * 4})`, fill: '#0010d8' });
}
for (let i = 0; i < 5; i++) {
    add(fingers, 'path', { d: `M${932 - i * 6} 50C${850 - i * 8} ${145 - i * 4} 740 ${210 - i * 5} ${600 + i * 30} ${240 - i * 9}`, fill: 'none', stroke: i % 2 ? '#70f8a0' : '#0020c0', 'stroke-width': 2.5 });
}

// gaps between neighbouring surfaces
const specks = document.getElementById('specks');
let dashes = '';
for (let i = 0; i < 90; i++) {
    const t = (i * 37 % 90) / 90;
    const x = 380 + t * 480;
    const y = 500 - t * t * 270 - (i * 13 % 7) * 8;
    dashes += `M${x.toFixed(1)} ${y.toFixed(1)}l${6 + i % 3 * 3} -${2 + Math.round(t * 7)}`;
}
add(specks, 'path', { d: dashes, stroke: '#4a8cc8', 'stroke-width': 1.5, fill: 'none' });
```
